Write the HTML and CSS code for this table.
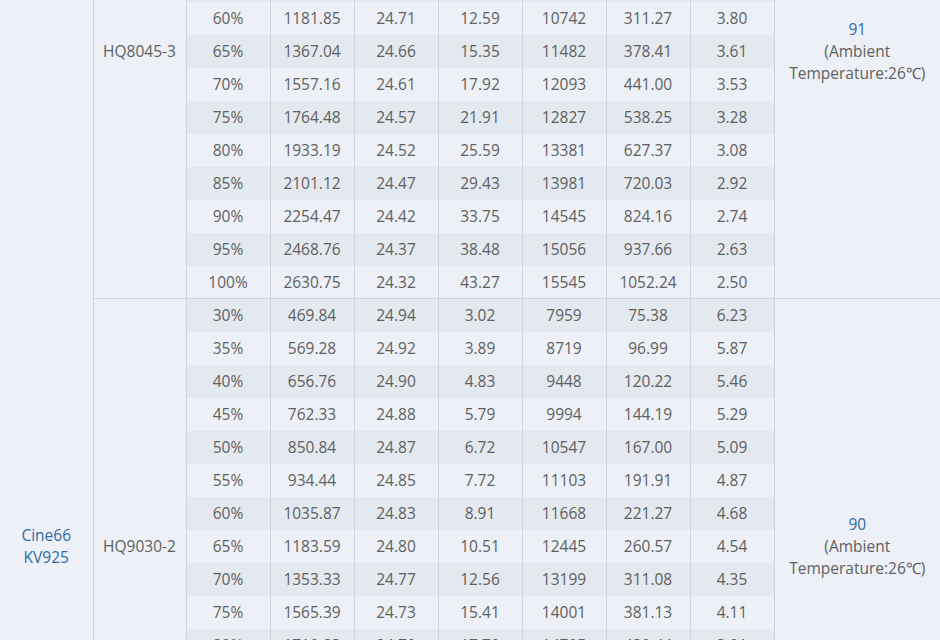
FILE: index.html
```html
<!DOCTYPE html>
<html lang="en">
<head>
<meta charset="utf-8">
<title>Test data</title>
<link rel="stylesheet" href="styles.css">
</head>
<body>
<div class="viewport">
<table class="data">
<colgroup>
<col class="c-model"><col class="c-code">
<col class="c-num"><col class="c-num"><col class="c-num"><col class="c-num"><col class="c-num"><col class="c-num"><col class="c-num">
<col class="c-note">
</colgroup>
<tbody>
<tr class="first"><td class="model" rowspan="45">Cine66<br>KV925</td><td class="code" rowspan="15">HQ8045-3</td><td class="d">30%</td><td class="d">420.15</td><td class="d">24.95</td><td class="d">2.71</td><td class="d">7512</td><td class="d">67.42</td><td class="d">6.23</td><td class="note" rowspan="15"><span class="val">91</span><br>(Ambient Temperature:26℃)</td></tr>
<tr><td class="d">35%</td><td class="d">520.66</td><td class="d">24.93</td><td class="d">3.52</td><td class="d">8301</td><td class="d">87.61</td><td class="d">5.92</td></tr>
<tr><td class="d">40%</td><td class="d">618.30</td><td class="d">24.91</td><td class="d">4.49</td><td class="d">8957</td><td class="d">111.85</td><td class="d">5.53</td></tr>
<tr><td class="d">45%</td><td class="d">735.42</td><td class="d">24.88</td><td class="d">5.68</td><td class="d">9580</td><td class="d">141.26</td><td class="d">5.21</td></tr>
<tr><td class="d">50%</td><td class="d">870.19</td><td class="d">24.84</td><td class="d">7.43</td><td class="d">10150</td><td class="d">184.68</td><td class="d">4.71</td></tr>
<tr><td class="d">55%</td><td class="d">1020.63</td><td class="d">24.78</td><td class="d">9.85</td><td class="d">10451</td><td class="d">244.10</td><td class="d">4.19</td></tr>
<tr><td class="d">60%</td><td class="d">1181.85</td><td class="d">24.71</td><td class="d">12.59</td><td class="d">10742</td><td class="d">311.27</td><td class="d">3.80</td></tr>
<tr><td class="d">65%</td><td class="d">1367.04</td><td class="d">24.66</td><td class="d">15.35</td><td class="d">11482</td><td class="d">378.41</td><td class="d">3.61</td></tr>
<tr><td class="d">70%</td><td class="d">1557.16</td><td class="d">24.61</td><td class="d">17.92</td><td class="d">12093</td><td class="d">441.00</td><td class="d">3.53</td></tr>
<tr><td class="d">75%</td><td class="d">1764.48</td><td class="d">24.57</td><td class="d">21.91</td><td class="d">12827</td><td class="d">538.25</td><td class="d">3.28</td></tr>
<tr><td class="d">80%</td><td class="d">1933.19</td><td class="d">24.52</td><td class="d">25.59</td><td class="d">13381</td><td class="d">627.37</td><td class="d">3.08</td></tr>
<tr><td class="d">85%</td><td class="d">2101.12</td><td class="d">24.47</td><td class="d">29.43</td><td class="d">13981</td><td class="d">720.03</td><td class="d">2.92</td></tr>
<tr><td class="d">90%</td><td class="d">2254.47</td><td class="d">24.42</td><td class="d">33.75</td><td class="d">14545</td><td class="d">824.16</td><td class="d">2.74</td></tr>
<tr><td class="d">95%</td><td class="d">2468.76</td><td class="d">24.37</td><td class="d">38.48</td><td class="d">15056</td><td class="d">937.66</td><td class="d">2.63</td></tr>
<tr><td class="d">100%</td><td class="d">2630.75</td><td class="d">24.32</td><td class="d">43.27</td><td class="d">15545</td><td class="d">1052.24</td><td class="d">2.50</td></tr>

<tr class="first"><td class="code" rowspan="15">HQ9030-2</td><td class="d">30%</td><td class="d">469.84</td><td class="d">24.94</td><td class="d">3.02</td><td class="d">7959</td><td class="d">75.38</td><td class="d">6.23</td><td class="note" rowspan="15"><span class="val">90</span><br>(Ambient Temperature:26℃)</td></tr>
<tr><td class="d">35%</td><td class="d">569.28</td><td class="d">24.92</td><td class="d">3.89</td><td class="d">8719</td><td class="d">96.99</td><td class="d">5.87</td></tr>
<tr><td class="d">40%</td><td class="d">656.76</td><td class="d">24.90</td><td class="d">4.83</td><td class="d">9448</td><td class="d">120.22</td><td class="d">5.46</td></tr>
<tr><td class="d">45%</td><td class="d">762.33</td><td class="d">24.88</td><td class="d">5.79</td><td class="d">9994</td><td class="d">144.19</td><td class="d">5.29</td></tr>
<tr><td class="d">50%</td><td class="d">850.84</td><td class="d">24.87</td><td class="d">6.72</td><td class="d">10547</td><td class="d">167.00</td><td class="d">5.09</td></tr>
<tr><td class="d">55%</td><td class="d">934.44</td><td class="d">24.85</td><td class="d">7.72</td><td class="d">11103</td><td class="d">191.91</td><td class="d">4.87</td></tr>
<tr><td class="d">60%</td><td class="d">1035.87</td><td class="d">24.83</td><td class="d">8.91</td><td class="d">11668</td><td class="d">221.27</td><td class="d">4.68</td></tr>
<tr><td class="d">65%</td><td class="d">1183.59</td><td class="d">24.80</td><td class="d">10.51</td><td class="d">12445</td><td class="d">260.57</td><td class="d">4.54</td></tr>
<tr><td class="d">70%</td><td class="d">1353.33</td><td class="d">24.77</td><td class="d">12.56</td><td class="d">13199</td><td class="d">311.08</td><td class="d">4.35</td></tr>
<tr><td class="d">75%</td><td class="d">1565.39</td><td class="d">24.73</td><td class="d">15.41</td><td class="d">14001</td><td class="d">381.13</td><td class="d">4.11</td></tr>
<tr><td class="d">80%</td><td class="d">1710.83</td><td class="d">24.70</td><td class="d">17.70</td><td class="d">14705</td><td class="d">430.44</td><td class="d">3.91</td></tr>
<tr><td class="d">85%</td><td class="d">1889.52</td><td class="d">24.66</td><td class="d">21.32</td><td class="d">15376</td><td class="d">525.87</td><td class="d">3.59</td></tr>
<tr><td class="d">90%</td><td class="d">2068.40</td><td class="d">24.62</td><td class="d">25.44</td><td class="d">16012</td><td class="d">626.45</td><td class="d">3.30</td></tr>
<tr><td class="d">95%</td><td class="d">2262.18</td><td class="d">24.57</td><td class="d">30.17</td><td class="d">16590</td><td class="d">741.26</td><td class="d">3.05</td></tr>
<tr><td class="d">100%</td><td class="d">2445.06</td><td class="d">24.51</td><td class="d">35.02</td><td class="d">17120</td><td class="d">858.33</td><td class="d">2.85</td></tr>

<tr class="first"><td class="code" rowspan="15">HQ9060-2</td><td class="d">30%</td><td class="d">512.40</td><td class="d">24.93</td><td class="d">3.36</td><td class="d">8120</td><td class="d">83.77</td><td class="d">6.10</td><td class="note" rowspan="15"><span class="val">89</span><br>(Ambient Temperature:26℃)</td></tr>
<tr><td class="d">35%</td><td class="d">611.25</td><td class="d">24.91</td><td class="d">4.27</td><td class="d">8864</td><td class="d">106.35</td><td class="d">5.75</td></tr>
<tr><td class="d">40%</td><td class="d">705.18</td><td class="d">24.89</td><td class="d">5.24</td><td class="d">9573</td><td class="d">130.42</td><td class="d">5.41</td></tr>
<tr><td class="d">45%</td><td class="d">812.66</td><td class="d">24.87</td><td class="d">6.29</td><td class="d">10139</td><td class="d">156.44</td><td class="d">5.19</td></tr>
<tr><td class="d">50%</td><td class="d">904.27</td><td class="d">24.85</td><td class="d">7.31</td><td class="d">10688</td><td class="d">181.65</td><td class="d">4.98</td></tr>
<tr><td class="d">55%</td><td class="d">993.52</td><td class="d">24.83</td><td class="d">8.38</td><td class="d">11236</td><td class="d">208.08</td><td class="d">4.77</td></tr>
<tr><td class="d">60%</td><td class="d">1101.39</td><td class="d">24.81</td><td class="d">9.67</td><td class="d">11810</td><td class="d">239.91</td><td class="d">4.59</td></tr>
<tr><td class="d">65%</td><td class="d">1258.04</td><td class="d">24.78</td><td class="d">11.42</td><td class="d">12590</td><td class="d">282.99</td><td class="d">4.45</td></tr>
<tr><td class="d">70%</td><td class="d">1438.72</td><td class="d">24.75</td><td class="d">13.65</td><td class="d">13342</td><td class="d">337.84</td><td class="d">4.26</td></tr>
<tr><td class="d">75%</td><td class="d">1664.10</td><td class="d">24.71</td><td class="d">16.76</td><td class="d">14150</td><td class="d">414.14</td><td class="d">4.02</td></tr>
<tr><td class="d">80%</td><td class="d">1818.35</td><td class="d">24.68</td><td class="d">19.26</td><td class="d">14860</td><td class="d">475.34</td><td class="d">3.83</td></tr>
<tr><td class="d">85%</td><td class="d">2009.07</td><td class="d">24.64</td><td class="d">23.19</td><td class="d">15530</td><td class="d">571.40</td><td class="d">3.52</td></tr>
<tr><td class="d">90%</td><td class="d">2199.36</td><td class="d">24.60</td><td class="d">27.68</td><td class="d">16171</td><td class="d">680.93</td><td class="d">3.23</td></tr>
<tr><td class="d">95%</td><td class="d">2405.42</td><td class="d">24.55</td><td class="d">32.82</td><td class="d">16752</td><td class="d">805.73</td><td class="d">2.99</td></tr>
<tr><td class="d">100%</td><td class="d">2599.88</td><td class="d">24.49</td><td class="d">38.10</td><td class="d">17284</td><td class="d">933.07</td><td class="d">2.79</td></tr>
</tbody>
</table>
</div>
</body>
</html>
```
FILE: styles.css
```css
html, body {
  margin: 0;
  padding: 0;
  background: #edf1f7;
}

.viewport {
  width: 940px;
  height: 640px;
  overflow: hidden;
}

.data {
  margin-top: -197px;
  width: 940px;
  table-layout: fixed;
  border-collapse: collapse;
  font-family: "Open Sans", "Liberation Sans", sans-serif;
  font-size: 15.5px;
  line-height: 22px;
  color: #606060;
  text-align: center;
}

.c-model { width: 93px; }
.c-code { width: 93px; }
.c-num { width: 84px; }
.c-note { width: 166px; }

.data td {
  height: 33px;
  padding: 0;
  vertical-align: middle;
  white-space: nowrap;
  border-left: 1px solid #d0d6de;
  box-sizing: border-box;
}

.data td.model {
  border-left: none;
  color: #2f6aa6;
  background: #edf1f7;
}

.data td.code {
  background: #edf1f7;
}

.data td.note {
  white-space: normal;
  padding: 0 6px;
  background: #edf1f7;
}

.note .val {
  color: #2f6aa6;
}

.data td.d {
  background: #edf1f7;
}

.data tr:nth-child(even) td.d {
  background: #e4e9f0;
}

.data tr.first td {
  border-top: 1px solid #d0d6de;
}

.data tr.first td.model {
  border-top: none;
}
```
